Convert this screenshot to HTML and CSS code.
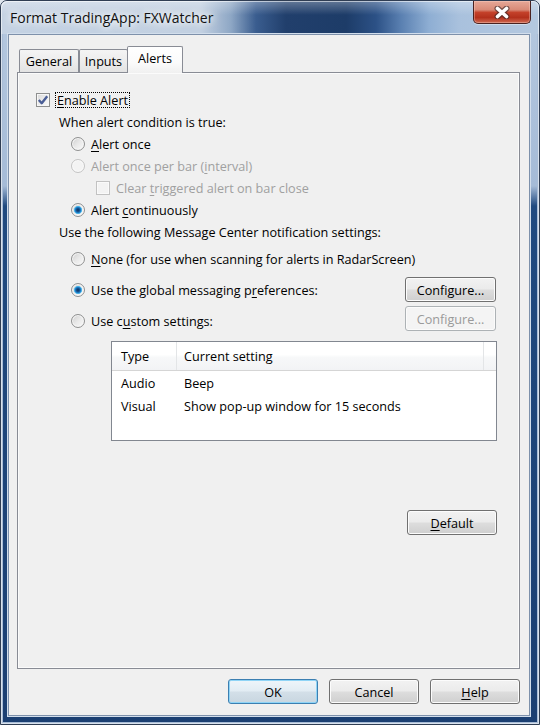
FILE: index.html
```
<!DOCTYPE html>
<html lang="en">
<head>
<meta charset="utf-8">
<title>Format TradingApp: FXWatcher</title>
<link rel="stylesheet" href="styles.css">
</head>
<body>
<div class="window">
  <div class="titlebar">
    <span class="title">Format TradingApp: FXWatcher</span>
    <div class="close">
      <svg width="18" height="13" viewBox="0 0 18 13">
        <path d="M4.5 2.5 L13.5 10.5 M13.5 2.5 L4.5 10.5" stroke="#3d2b2b" stroke-opacity=".65" stroke-width="6" stroke-linecap="round" fill="none"/>
        <path d="M4.5 2.5 L13.5 10.5 M13.5 2.5 L4.5 10.5" stroke="#ffffff" stroke-width="3.6" stroke-linecap="round" fill="none"/>
      </svg>
    </div>
  </div>
  <div class="client">
    <div class="tabs">
      <div class="tab tab-general">General</div>
      <div class="tab tab-inputs">Inputs</div>
      <div class="tab tab-alerts active">Alerts</div>
    </div>
    <div class="panel">
      <div class="row">
        <span class="check on"><svg width="12" height="12" viewBox="0 0 12 12"><path d="M1.8 6 L4.7 9.2 L10.2 2.2" fill="none" stroke="#4a5e96" stroke-width="2.4" stroke-linejoin="round"/></svg></span>
        <span class="focus"><u>E</u>nable Alert</span>
      </div>
      <div class="row ind1">When alert condition is true:</div>
      <div class="row ind2"><span class="radio"></span><span><u>A</u>lert once</span></div>
      <div class="row ind2 disabled"><span class="radio"></span><span>Alert once per bar (<u>i</u>nterval)</span></div>
      <div class="row ind3 disabled"><span class="check"></span><span>Clear <u>t</u>riggered alert on bar close</span></div>
      <div class="row ind2"><span class="radio on"></span><span>Alert <u>c</u>ontinuously</span></div>
      <div class="row ind1">Use the following Message Center notification settings:</div>
      <div class="row tall ind2"><span class="radio"></span><span><u>N</u>one (for use when scanning for alerts in RadarScreen)</span></div>
      <div class="row tall ind2"><span class="radio on"></span><span class="grow">Use the global messaging p<u>r</u>eferences:</span><button class="btn configure">Confi<u>g</u>ure...</button></div>
      <div class="row tall ind2"><span class="radio"></span><span class="grow">Use c<u>u</u>stom settings:</span><button class="btn configure configure-off" disabled>Configure...</button></div>
      <div class="list">
        <div class="lrow lhead"><span class="c1">Type</span><span class="c2">Current setting</span><span class="c3"></span></div>
        <div class="lrow"><span class="c1">Audio</span><span class="c2">Beep</span></div>
        <div class="lrow"><span class="c1">Visual</span><span class="c2">Show pop-up window for 15 seconds</span></div>
      </div>
      <div class="default-row"><button class="btn"><u>D</u>efault</button></div>
    </div>
    <div class="footer">
      <button class="btn primary">OK</button>
      <button class="btn">Cancel</button>
      <button class="btn"><u>H</u>elp</button>
    </div>
  </div>
</div>
</body>
</html>
```
FILE: styles.css
```
html, body {
  margin: 0;
  padding: 0;
  background: #dfe6ee;
}
body {
  width: 540px;
  height: 725px;
  overflow: hidden;
  font-family: "Open Sans", "Noto Sans", sans-serif;
  font-size: 12.65px;
  color: #000;
}
.window {
  width: 540px;
  height: 725px;
  box-sizing: border-box;
  border: 1px solid #2f3d53;
  border-radius: 7px 7px 0 0;
  padding: 0 9px 8px 7px;
  display: flex;
  flex-direction: column;
  background: linear-gradient(180deg, #b6c9e0 0, #a5bbd7 185px, #204a80 205px, #1b3f72 100%);
  box-shadow: inset 0 0 0 1px rgba(255,255,255,0.55), inset 0 0 0 2px #a8bcd6;
}
.titlebar {
  height: 33px;
  margin: 0 -9px 0 -7px;
  padding-left: 9px;
  display: flex;
  align-items: flex-start;
  justify-content: space-between;
  flex: none;
  border-radius: 6px 6px 0 0;
  background:
    linear-gradient(180deg, rgba(255,255,255,0.3) 0, rgba(255,255,255,0) 14px),
    linear-gradient(90deg, #c4d2e3 0, #c2d0e1 200px, #8ea7c5 230px, #3a5d8f 255px, #213f6c 285px, #1d3c68 345px, #2c5186 375px, #5a80b1 400px, #8eaed3 428px, #a9c1dd 458px, #b4c8df 100%);
  box-shadow: inset 1px 1px 0 rgba(255,255,255,0.55), inset -1px 0 0 rgba(255,255,255,0.55);
}
.title {
  font-size: 14px;
  line-height: 32px;
  margin-top: 1px;
  color: #111;
  text-shadow: 0 0 6px #fff, 0 0 10px rgba(255,255,255,0.9), 0 0 16px rgba(255,255,255,0.8);
}
.close {
  width: 58px;
  height: 23px;
  margin-right: 8px;
  box-sizing: border-box;
  border: 1px solid #4a2220;
  border-top: none;
  border-radius: 0 0 5px 5px;
  background: linear-gradient(180deg, #e6a898 0, #d88a77 40%, #c4412a 52%, #b3301c 75%, #d06a52 100%);
  box-shadow: inset 0 0 0 1px rgba(255,220,210,0.35), 0 1px 0 rgba(255,255,255,0.4);
  display: flex;
  align-items: center;
  justify-content: center;
}
.close svg { display: block; }
.client {
  flex: 1;
  display: flex;
  flex-direction: column;
  background: #f0f0f0;
  border: 1px solid #7e91ab;
  box-shadow: 0 0 0 1px #d2deec;
  padding-top: 11px;
  min-height: 0;
}
.tabs {
  height: 27px;
  margin-left: 10px;
  display: flex;
  align-items: flex-end;
  flex: none;
}
.tab {
  height: 24px;
  box-sizing: border-box;
  border: 1px solid #898c95;
  border-bottom: none;
  border-radius: 2px 2px 0 0;
  background: linear-gradient(180deg, #f4f4f4 0, #ececec 50%, #e2e2e2 100%);
  text-align: center;
  line-height: 22px;
}
.tab-general { width: 60px; }
.tab-inputs { width: 49px; }
.tab-alerts {
  width: 56px;
  margin-left: -1px;
  height: 27px;
  line-height: 23px;
  position: relative;
  z-index: 1;
  background: linear-gradient(180deg, #ffffff 0, #fbfbfb 60%, #f0f0f0 100%);
}
.panel {
  flex: 1;
  margin: -1px 9px 0 8px;
  box-sizing: border-box;
  border: 1px solid #898c95;
  box-shadow: inset 0 0 0 1px #fbfbfb;
  background: #f0f0f0;
  padding: 16px 22px 0 18px;
}
.row {
  display: flex;
  align-items: center;
  gap: 6px;
  height: 22px;
  white-space: nowrap;
}
.row.tall { height: 31px; }
.ind1 { padding-left: 23px; }
.ind2 { padding-left: 35px; }
.ind3 { padding-left: 60px; }
.grow { flex: 1; }
.disabled { color: #a0a0a0; }
u {
  text-decoration-thickness: 1px;
  text-underline-offset: 2px;
}
.focus {
  display: inline-block;
  height: 16px;
  line-height: 14px;
  box-sizing: border-box;
  border: 1px dotted #000;
  padding: 0 1px;
  margin-left: -1px;
}
.check {
  width: 14px;
  height: 14px;
  box-sizing: border-box;
  border: 1px solid #8e8f8f;
  background: linear-gradient(135deg, #d8d8d8 0, #eeeeee 55%, #fbfbfb 100%);
  box-shadow: inset 0 0 0 1px #f6f6f6;
  flex: none;
  display: flex;
  align-items: center;
  justify-content: center;
}
.check svg { display: block; }
.disabled .check {
  border-color: #c2c2c2;
  background: #f3f3f3;
  box-shadow: inset 0 0 0 1px #fafafa;
}
.radio {
  width: 14px;
  height: 14px;
  box-sizing: border-box;
  border-radius: 50%;
  border: 1px solid #8f9090;
  background: linear-gradient(135deg, #cfcfcf 0, #e9e9e9 50%, #fafafa 100%);
  box-shadow: inset 0 0 0 1px #f7f7f7;
  flex: none;
}
.radio.on {
  background:
    radial-gradient(circle at 50% 50%, #0d2f58 0, #14508f 1.6px, #1f7fc6 2.8px, #5cc0ef 3.8px, rgba(120,200,240,0) 4.4px),
    linear-gradient(135deg, #cfcfcf 0, #e9e9e9 50%, #fafafa 100%);
}
.disabled .radio {
  border-color: #c4c4c4;
  background: #f3f3f3;
  box-shadow: inset 0 0 0 1px #fafafa;
}
.btn {
  width: 90px;
  height: 25px;
  box-sizing: border-box;
  padding: 0;
  font: inherit;
  color: #000;
  border: 1px solid #707070;
  border-radius: 3px;
  background: linear-gradient(180deg, #f2f2f2 0, #ebebeb 48%, #dddddd 52%, #cfcfcf 100%);
  box-shadow: inset 0 0 0 1px #fcfcfc;
  flex: none;
}
.btn.primary {
  border-color: #3c7fb1;
  background: linear-gradient(180deg, #eef5fa 0, #e2ecf3 48%, #d3dfe8 52%, #c8d6e0 100%);
  box-shadow: inset 0 0 0 1px #8fd4f6;
}
.btn.configure {
  width: 91px;
  margin-right: 1px;
}
.btn.configure-off {
  align-self: flex-start;
  margin-top: 1px;
  border-color: #adb2b5;
  background: #f4f4f4;
  color: #9a9a9a;
  box-shadow: inset 0 0 0 1px #fbfbfb;
}
.list {
  margin: 5px 0 0 75px;
  height: 100px;
  box-sizing: border-box;
  border: 1px solid #828790;
  background: #fff;
}
.lrow {
  display: flex;
  height: 23px;
  align-items: center;
  white-space: nowrap;
}
.lhead {
  height: 29px;
  box-sizing: border-box;
  border-bottom: 1px solid #d5d5d5;
  align-items: stretch;
  background: linear-gradient(180deg, #ffffff 0, #ffffff 45%, #f7f8f9 55%, #f2f3f5 100%);
}
.c1 {
  width: 65px;
  padding-left: 9px;
  box-sizing: border-box;
}
.c2 {
  width: 307px;
  padding-left: 7px;
  box-sizing: border-box;
}
.lhead .c1, .lhead .c2, .lhead .c3 {
  display: flex;
  align-items: center;
  border-right: 1px solid #e3e5e7;
}
.lhead .c3 {
  flex: 1;
  border-right: none;
}
.default-row {
  display: flex;
  justify-content: flex-end;
  margin-top: 69px;
}
.footer {
  display: flex;
  justify-content: flex-end;
  gap: 11px;
  margin-top: 10px;
  padding: 0 9px 11px 0;
  flex: none;
}
```
